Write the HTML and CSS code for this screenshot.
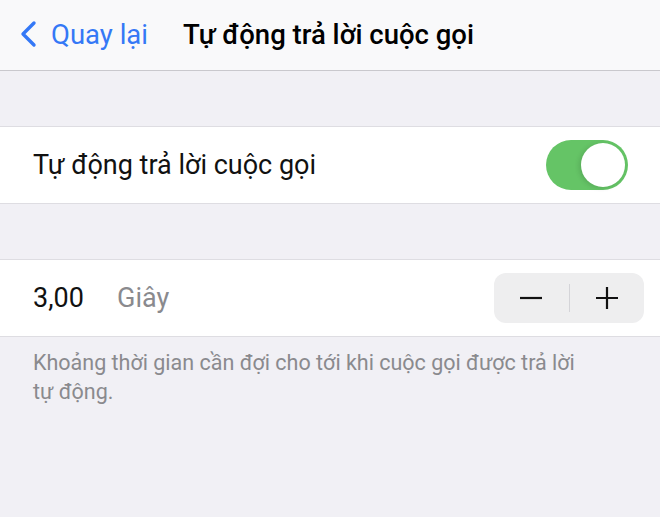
FILE: index.html
```html
<!DOCTYPE html>
<html lang="vi">
<head>
    <meta charset="UTF-8">
    <meta name="viewport" content="width=device-width, initial-scale=1.0">
    <title>Tự động trả lời cuộc gọi</title>
    <link rel="stylesheet" href="styles.css">
</head>
<body>

    <!-- Top navigation bar -->
    <header class="nav-bar">
        <a class="back-link" href="#">
            <svg class="chevron" width="18" height="28" viewBox="0 0 18 28">
                <path d="M15 3 L4 14 L15 25" fill="none" stroke="#3478f6" stroke-width="3.4" stroke-linecap="round" stroke-linejoin="round"/>
            </svg>
            <span>Quay lại</span>
        </a>
        <h1 class="nav-title">Tự động trả lời cuộc gọi</h1>
    </header>

    <!-- Toggle group -->
    <section class="group">
        <div class="row">
            <span class="row-label">Tự động trả lời cuộc gọi</span>
            <label class="switch">
                <input type="checkbox" checked>
                <span class="knob"></span>
            </label>
        </div>
    </section>

    <!-- Delay stepper group -->
    <section class="group">
        <div class="row">
            <span class="row-value">3,00</span>
            <span class="row-unit">Giây</span>
            <div class="stepper">
                <button class="step-btn">
                    <svg width="24" height="24" viewBox="0 0 24 24"><path d="M1 12 H23" stroke="#111" stroke-width="2.2"/></svg>
                </button>
                <span class="step-divider"></span>
                <button class="step-btn">
                    <svg width="24" height="24" viewBox="0 0 24 24"><path d="M1 12 H23 M12 1 V23" stroke="#111" stroke-width="2.2"/></svg>
                </button>
            </div>
        </div>
    </section>

    <p class="group-footer">Khoảng thời gian cần đợi cho tới khi cuộc gọi được trả lời tự động.</p>

</body>
</html>
```

FILE: styles.css
```css
/* Basic Reset */
* {
    margin: 0;
    padding: 0;
    box-sizing: border-box;
}

body {
    font-family: 'Roboto', 'Inter', sans-serif;
    background-color: #f1f0f5;
    color: #111;
    width: 660px;
    min-height: 517px;
}

/* Navigation bar */
.nav-bar {
    height: 71px;
    background-color: #f9f9fa;
    border-bottom: 1px solid #c9c8cd;
    display: flex;
    align-items: center;
    padding-left: 19px;
    padding-bottom: 2px;
}

.back-link {
    display: flex;
    align-items: center;
    color: #3478f6;
    text-decoration: none;
    font-size: 27.5px;
}

.chevron {
    margin-right: 14px;
}

.nav-title {
    margin-left: 35px;
    font-size: 27.5px;
    font-weight: 500;
    color: #000;
}

/* Grouped list */
.group {
    margin-top: 55px;
    background-color: #fff;
    border-top: 1px solid #dedde2;
    border-bottom: 1px solid #dedde2;
}

.row {
    height: 76px;
    display: flex;
    align-items: center;
    padding: 0 16px 0 33px;
    font-size: 27px;
}

.row-label {
    flex: 1;
}

.row-value {
    width: 84px;
}

.row-unit {
    flex: 1;
    color: #8a8a8e;
}

/* Toggle switch */
.switch {
    position: relative;
    width: 82px;
    height: 50px;
    margin-right: 16px;
}

.switch input {
    display: none;
}

.knob {
    position: absolute;
    inset: 0;
    background-color: #65c466;
    border-radius: 25px;
}

.knob::after {
    content: "";
    position: absolute;
    top: 3px;
    right: 3px;
    width: 44px;
    height: 44px;
    background-color: #fff;
    border-radius: 50%;
    box-shadow: -2px 1px 5px rgba(0, 0, 0, 0.12);
}

/* Stepper */
.stepper {
    width: 150px;
    height: 50px;
    background-color: #eeeeef;
    border-radius: 12px;
    display: flex;
    align-items: center;
}

.step-btn {
    flex: 1;
    height: 100%;
    border: none;
    background: none;
    display: flex;
    align-items: center;
    justify-content: center;
}

.step-divider {
    width: 1px;
    height: 28px;
    background-color: #d4d4d8;
}

/* Footer note under group */
.group-footer {
    padding: 11px 70px 0 33px;
    font-size: 21.5px;
    line-height: 29px;
    color: #8a8a8e;
}
```
